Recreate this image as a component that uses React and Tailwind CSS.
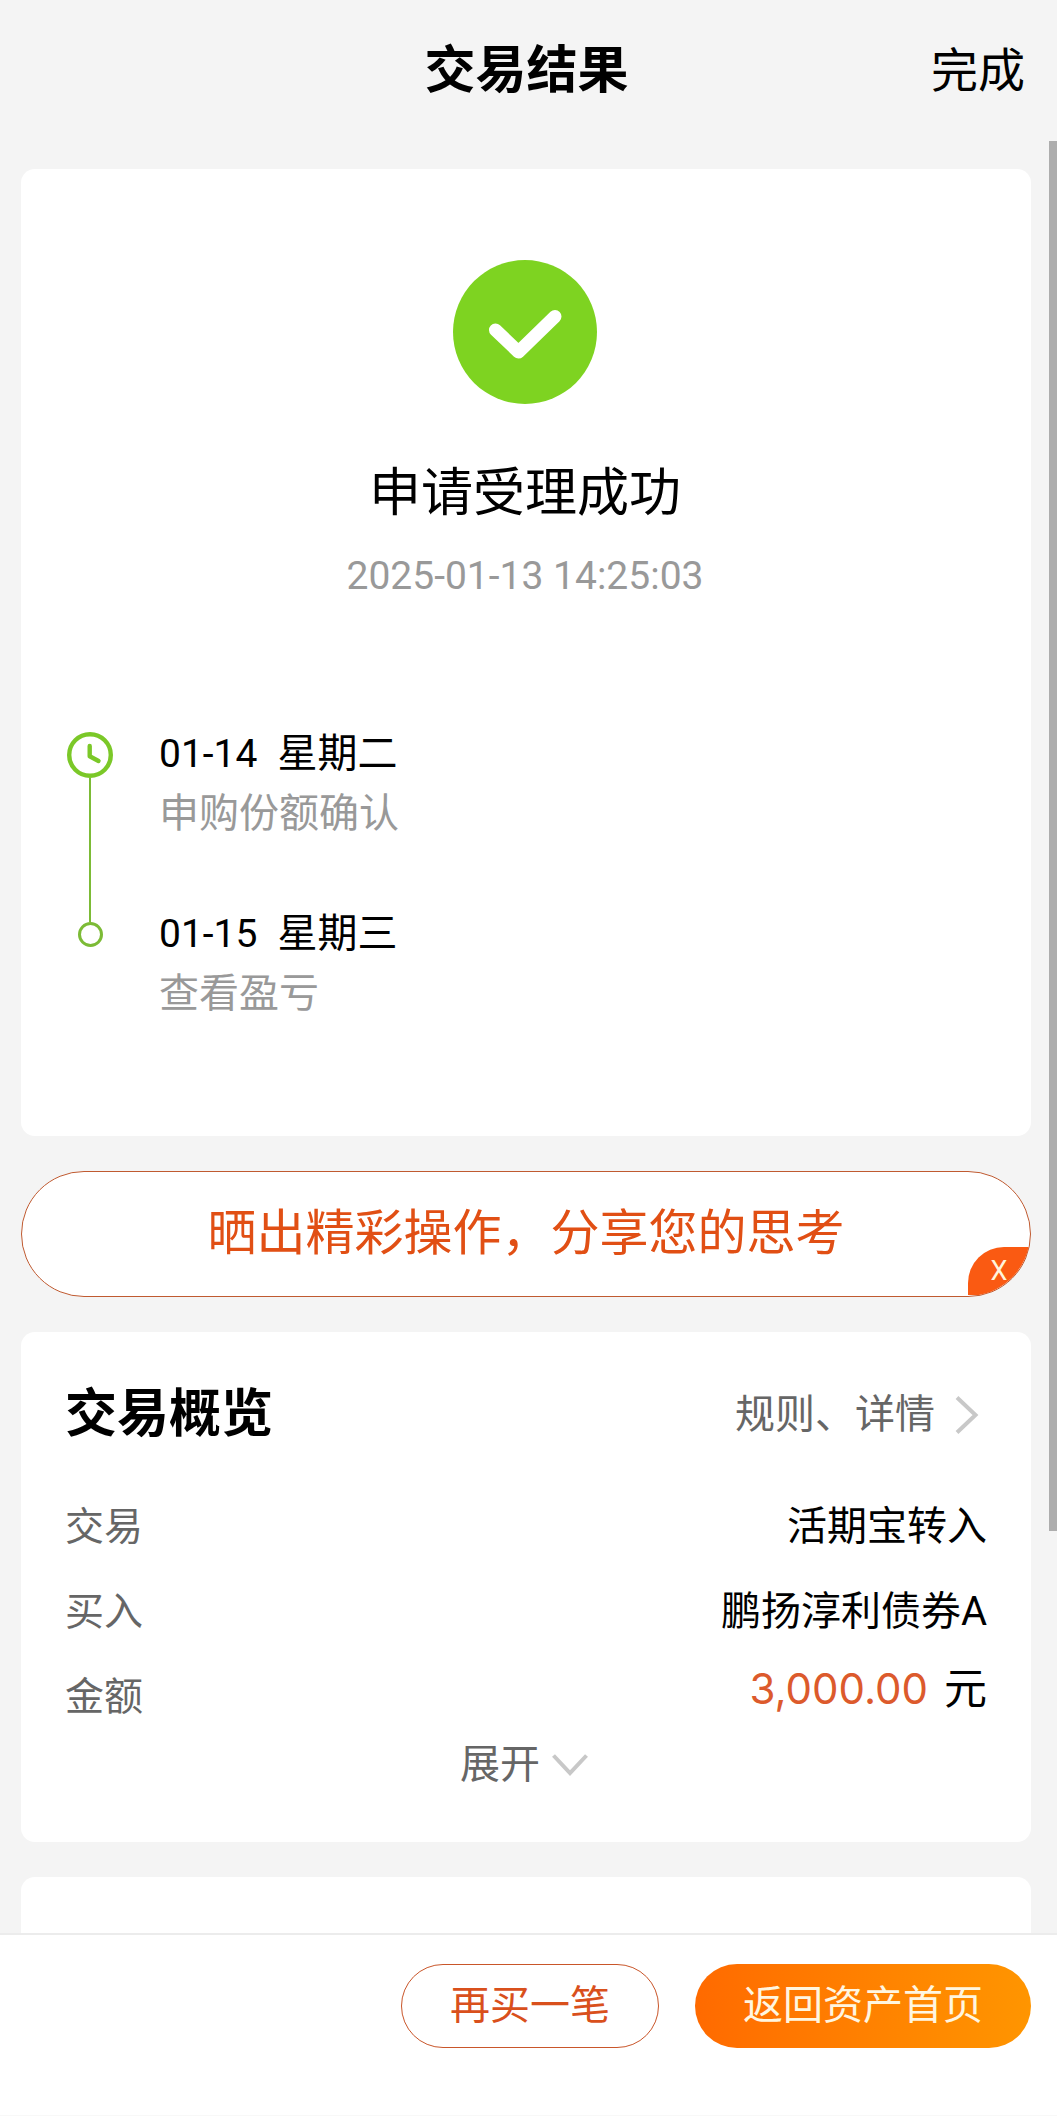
const timeline = [
  { date: "01-14", day: "星期二", note: "申购份额确认" },
  { date: "01-15", day: "星期三", note: "查看盈亏" },
];

const overview = [
  { label: "交易", value: "活期宝转入" },
  { label: "买入", value: "鹏扬淳利债券A" },
];

function SuccessIcon() {
  return (
    <svg className="size-36" viewBox="0 0 144 144" fill="none" aria-hidden="true">
      <circle cx="72" cy="72" r="72" fill="#7ed321" />
      <path d="M42.5 70 65.5 92 102 56.5" stroke="#fff" strokeWidth="13" strokeLinecap="round" strokeLinejoin="round" />
    </svg>
  );
}

function ClockIcon() {
  return (
    <svg className="size-[46px] shrink-0" viewBox="0 0 46 46" fill="none" stroke="#7bc828" aria-hidden="true">
      <circle cx="23" cy="23" r="20.8" strokeWidth="4.4" />
      <path d="M22.7 14V24.2L31.5 29" strokeWidth="4.4" strokeLinecap="round" strokeLinejoin="round" />
    </svg>
  );
}

function Header() {
  return (
    <header className="grid h-[142px] grid-cols-[1fr_auto_1fr] items-center pr-8 pl-7">
      <h1 className="col-start-2 text-[51px] leading-[64px] font-bold">交易结果</h1>
      <button type="button" className="justify-self-end text-[47px] leading-[64px]">
        完成
      </button>
    </header>
  );
}

function ResultCard() {
  return (
    <section className="rounded-[14px] bg-white pt-[91px] pr-12 pb-[112px] pl-[46px]">
      <div className="flex flex-col items-center">
        <SuccessIcon />
        <h2 className="mt-[54px] text-[52px] leading-[72px]">申请受理成功</h2>
        <time className="mt-4 text-[39px] leading-[60px] text-[#999]" dateTime="2025-01-13T14:25:03">
          2025-01-13 14:25:03
        </time>
      </div>
      <ol className="mt-[126px]">
        {timeline.map((step, i) => {
          const last = i === timeline.length - 1;
          return (
            <li key={step.date} className="flex gap-[46px]">
              <div className="flex w-[46px] flex-col items-center">
                {last ? (
                  <span className="size-[25px] rounded-full border-3 border-[#7cbb36]" />
                ) : (
                  <>
                    <ClockIcon />
                    <span className="w-0.5 flex-1 bg-[#7cbb36]" />
                  </>
                )}
              </div>
              <div className={last ? "-mt-[18px]" : "-mt-2 pb-[78px]"}>
                <p className="flex items-baseline gap-5 text-[40px] leading-[60px]">
                  <span className="text-[39px]">{step.date}</span>
                  <span>{step.day}</span>
                </p>
                <p className="text-[40px] leading-[60px] text-[#999]">{step.note}</p>
              </div>
            </li>
          );
        })}
      </ol>
    </section>
  );
}

function ShareBanner() {
  return (
    <div className="relative h-[126px] overflow-hidden rounded-full border border-[#c05a30] bg-white">
      <button type="button" className="size-full text-[49px] text-[#e14f14]">
        晒出精彩操作，分享您的思考
      </button>
      <button
        type="button"
        aria-label="关闭"
        className="absolute right-0 bottom-px h-12 w-[62px] rounded-tl-[36px] bg-[#fa5a12] text-[27px] text-[#fff4dc]"
      >
        X
      </button>
    </div>
  );
}

function OverviewCard() {
  return (
    <section className="rounded-[14px] bg-white px-11 pt-[45px] pb-[51px]">
      <div className="flex items-center justify-between">
        <h2 className="text-[52px] leading-[76px] font-bold">交易概览</h2>
        <a href="#rules" className="flex items-center gap-5 pr-2 text-[40px] leading-[60px] text-[#666]">
          规则、详情
          <svg className="h-10 w-6" viewBox="0 0 24 40" fill="none" stroke="#c8c8c8" strokeWidth="4" aria-hidden="true">
            <path d="M2 2.5 20.5 20 2 37.5" />
          </svg>
        </a>
      </div>
      <dl className="mt-[31px]">
        {overview.map((row) => (
          <div key={row.label} className="flex h-[85px] items-center justify-between text-[40px] leading-[60px]">
            <dt className="text-[39px] text-[#666]">{row.label}</dt>
            <dd>{row.value}</dd>
          </div>
        ))}
        <div className="flex h-[85px] items-center justify-between text-[40px] leading-[60px]">
          <dt className="text-[39px] text-[#666]">金额</dt>
          <dd className="flex gap-4 pb-4 text-[43px]">
            <span className="font-['Inter'] text-[42px] text-[#dc5a2c]">3,000.00</span>
            <span>元</span>
          </dd>
        </div>
      </dl>
      <button type="button" className="mx-auto flex items-center gap-3 pr-1 text-[40px] leading-[52px] text-[#666]">
        展开
        <svg className="h-6 w-9" viewBox="0 0 36 24" fill="none" stroke="#c8c8c8" strokeWidth="4" aria-hidden="true">
          <path d="M1.5 2.5 18 20 34.5 2.5" />
        </svg>
      </button>
    </section>
  );
}

function Footer() {
  return (
    <footer className="border-t-2 border-[#ececec] bg-white">
      <div className="flex h-[180px] justify-end gap-9 pt-[29px] pr-[26px] text-[40px]">
        <button type="button" className="h-[84px] rounded-full border border-[#c9562a] px-12 text-[#d9501c]">
          再买一笔
        </button>
        <button
          type="button"
          className="h-[84px] rounded-full bg-linear-to-r from-[#ff6a00] to-[#ff9500] px-12 text-[#fff6e0]"
        >
          返回资产首页
        </button>
      </div>
      <div className="h-2.5 border-t border-[#f8f8f8]" />
    </footer>
  );
}

export default function App() {
  return (
    <div className="relative flex min-h-screen flex-col bg-[#f4f4f4] font-['Roboto','Noto_Sans_CJK_SC',sans-serif] text-black">
      <Header />
      <main className="flex flex-1 flex-col gap-[35px] pt-[27px] pr-[26px] pl-[21px]">
        <ResultCard />
        <ShareBanner />
        <OverviewCard />
        <section className="min-h-14 flex-1 rounded-t-[14px] bg-white" />
      </main>
      <Footer />
      <div className="absolute top-[141px] right-0 h-[1390px] w-2 bg-[#adadad]" />
    </div>
  );
}
